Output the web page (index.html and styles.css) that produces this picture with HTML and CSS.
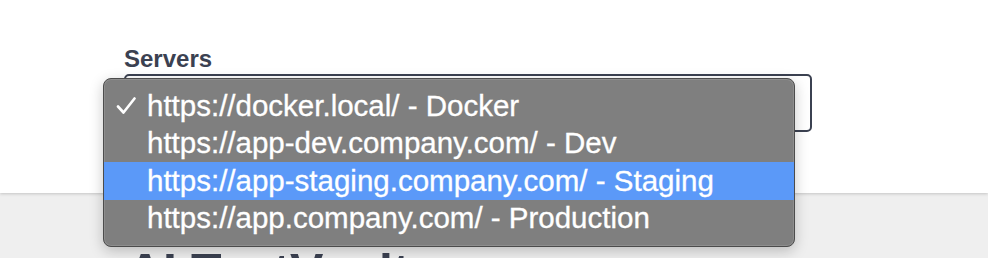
FILE: index.html
```html
<!DOCTYPE html>
<html>
<head>
<meta charset="utf-8">
<link rel="stylesheet" href="styles.css">
</head>
<body>
<div class="page">
  <section class="top">
    <label class="label">Servers</label>
    <div class="select"></div>
  </section>
  <section class="info">
    <h2 class="title">AI TestVault</h2>
  </section>
  <ul class="menu">
    <li class="item">
      <svg class="check" width="20" height="20" viewBox="0 0 20 20"><polyline points="2,10.5 7.5,16.5 18.5,2.5" fill="none" stroke="#fff" stroke-width="2.6" stroke-linecap="round" stroke-linejoin="round"/></svg>
      <span>https://docker.local/ - Docker</span>
    </li>
    <li class="item"><span>https://app-dev.company.com/ - Dev</span></li>
    <li class="item active"><span>https://app-staging.company.com/ - Staging</span></li>
    <li class="item"><span>https://app.company.com/ - Production</span></li>
  </ul>
</div>
</body>
</html>
```
FILE: styles.css
```css
html, body {
  margin: 0;
  padding: 0;
  background: #efefef;
  overflow: hidden;
}
.page {
  position: relative;
  width: 988px;
  height: 258px;
  overflow: hidden;
  font-family: "Liberation Sans", Arial, sans-serif;
}
.top {
  background: #fff;
  height: 193px;
  box-sizing: border-box;
  padding: 45px 0 0 124px;
  box-shadow: 0 1px 3px rgba(0, 0, 0, 0.18);
  position: relative;
  z-index: 1;
}
.label {
  display: block;
  font-weight: bold;
  font-size: 24px;
  line-height: 27px;
  color: #3b4151;
}
.select {
  margin-top: 2px;
  width: 688px;
  height: 58px;
  box-sizing: border-box;
  border: 2px solid #3b4151;
  border-radius: 5px;
  background: #fff;
}
.info {
  padding: 0 0 0 127px;
}
.title {
  margin: 0;
  padding-top: 54px;
  font-size: 50px;
  line-height: 50px;
  font-weight: bold;
  color: #3b4151;
  white-space: nowrap;
}
.menu {
  position: absolute;
  z-index: 5;
  left: 103px;
  top: 78px;
  width: 692px;
  height: 169px;
  box-sizing: border-box;
  margin: 0;
  padding: 8px 0;
  list-style: none;
  background: #7f7f7f;
  border: 1px solid #4c4c4c;
  border-radius: 8px;
  box-shadow: inset 0 0 0 1px rgba(255, 255, 255, 0.12), 0 4px 14px rgba(0, 0, 0, 0.22);
}
.item {
  position: relative;
  height: 37.5px;
  display: flex;
  align-items: center;
  padding-left: 43px;
  color: #fff;
  font-size: 29.5px;
  white-space: nowrap;
  -webkit-text-stroke: 0.3px #fff;
}
.item.active {
  background: #5b99f8;
}
.check {
  position: absolute;
  left: 12px;
  top: 9px;
}
```
